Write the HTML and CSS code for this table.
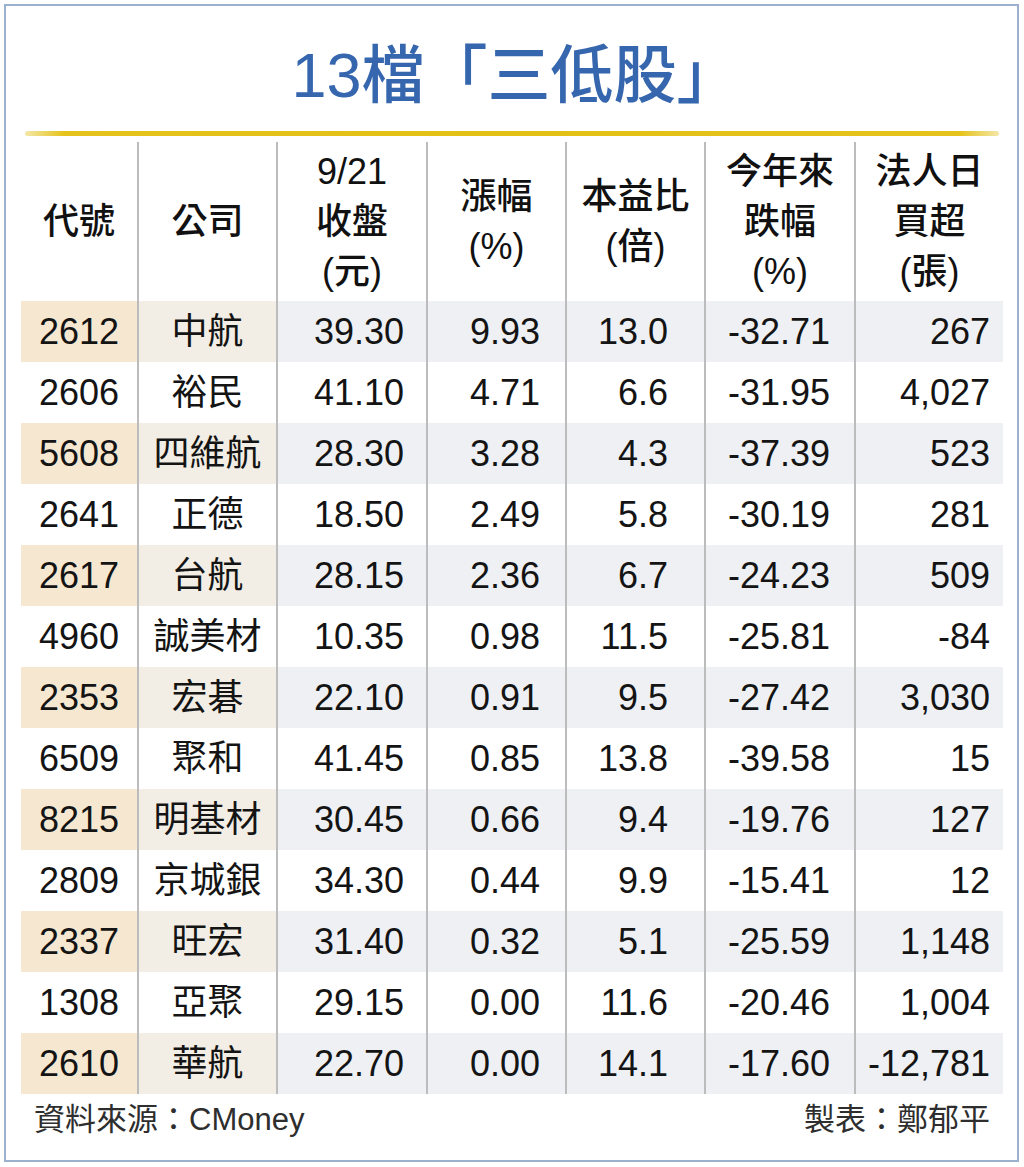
FILE: index.html
```html
<!DOCTYPE html>
<html lang="zh-Hant">
<head>
<meta charset="utf-8">
<title>13檔「三低股」</title>
<link rel="stylesheet" href="styles.css">
</head>
<body>
<div class="frame">
  <h1 class="title">13檔「三低股」</h1>
  <div class="rule"></div>
  <table class="stocks">
    <colgroup>
      <col class="w-code"><col class="w-name"><col class="w-close"><col class="w-chg"><col class="w-pe"><col class="w-ytd"><col class="w-inst">
    </colgroup>
    <thead>
      <tr>
        <th>代號</th>
        <th>公司</th>
        <th>9/21<br>收盤<br>(元)</th>
        <th>漲幅<br>(%)</th>
        <th>本益比<br>(倍)</th>
        <th>今年來<br>跌幅<br>(%)</th>
        <th>法人日<br>買超<br>(張)</th>
      </tr>
    </thead>
    <tbody>
      <tr class="hl"><td>2612</td><td>中航</td><td>39.30</td><td>9.93</td><td>13.0</td><td>-32.71</td><td>267</td></tr>
      <tr><td>2606</td><td>裕民</td><td>41.10</td><td>4.71</td><td>6.6</td><td>-31.95</td><td>4,027</td></tr>
      <tr class="hl"><td>5608</td><td>四維航</td><td>28.30</td><td>3.28</td><td>4.3</td><td>-37.39</td><td>523</td></tr>
      <tr><td>2641</td><td>正德</td><td>18.50</td><td>2.49</td><td>5.8</td><td>-30.19</td><td>281</td></tr>
      <tr class="hl"><td>2617</td><td>台航</td><td>28.15</td><td>2.36</td><td>6.7</td><td>-24.23</td><td>509</td></tr>
      <tr><td>4960</td><td>誠美材</td><td>10.35</td><td>0.98</td><td>11.5</td><td>-25.81</td><td>-84</td></tr>
      <tr class="hl"><td>2353</td><td>宏碁</td><td>22.10</td><td>0.91</td><td>9.5</td><td>-27.42</td><td>3,030</td></tr>
      <tr><td>6509</td><td>聚和</td><td>41.45</td><td>0.85</td><td>13.8</td><td>-39.58</td><td>15</td></tr>
      <tr class="hl"><td>8215</td><td>明基材</td><td>30.45</td><td>0.66</td><td>9.4</td><td>-19.76</td><td>127</td></tr>
      <tr><td>2809</td><td>京城銀</td><td>34.30</td><td>0.44</td><td>9.9</td><td>-15.41</td><td>12</td></tr>
      <tr class="hl"><td>2337</td><td>旺宏</td><td>31.40</td><td>0.32</td><td>5.1</td><td>-25.59</td><td>1,148</td></tr>
      <tr><td>1308</td><td>亞聚</td><td>29.15</td><td>0.00</td><td>11.6</td><td>-20.46</td><td>1,004</td></tr>
      <tr class="hl"><td>2610</td><td>華航</td><td>22.70</td><td>0.00</td><td>14.1</td><td>-17.60</td><td>-12,781</td></tr>
    </tbody>
  </table>
  <div class="footer">
    <span>資料來源：CMoney</span>
    <span>製表：鄭郁平</span>
  </div>
</div>
</body>
</html>
```

FILE: styles.css
```css
html, body {
  margin: 0;
  padding: 0;
  background: #ffffff;
}

body {
  font-family: "Liberation Sans", "Noto Sans CJK TC", sans-serif;
  color: #151515;
}

.frame {
  box-sizing: border-box;
  width: 1015px;
  height: 1158px;
  margin: 4px 0 0 4px;
  border: 2px solid #9cb0d0;
  background: #ffffff;
}

.title {
  margin: 0;
  padding-top: 14px;
  padding-left: 8px;
  height: 110px;
  line-height: 110px;
  text-align: center;
  font-size: 63px;
  font-weight: 500;
  color: #3566ae;
}

.rule {
  margin: 1px 18px 0 19px;
  height: 5px;
  border-radius: 3px;
  background: linear-gradient(to right, #f3e7a8 0%, #e6c31c 4%, #e3c015 50%, #e6c31c 96%, #f3e7a8 100%);
}

.stocks {
  margin: 6px 0 0 15px;
  width: 982px;
  table-layout: fixed;
  border-collapse: separate;
  border-spacing: 0;
  font-size: 36px;
}

.w-code { width: 116px; }
.w-name { width: 139px; }
.w-close { width: 150px; }
.w-chg { width: 139px; }
.w-pe { width: 139px; }
.w-ytd { width: 150px; }
.w-inst { width: 149px; }

.stocks th,
.stocks td {
  padding: 0;
  border-left: 2px solid #bcbcbc;
  vertical-align: middle;
  white-space: nowrap;
}

.stocks th:first-child,
.stocks td:first-child {
  border-left: none;
}

.stocks th {
  height: 159px;
  font-weight: 500;
  line-height: 50px;
  text-align: center;
  color: #111111;
}

.stocks td {
  height: 61px;
  line-height: 40px;
  color: #141414;
}

.stocks td:nth-child(1),
.stocks td:nth-child(2) {
  text-align: center;
}

.stocks td:nth-child(3) { text-align: right; padding-right: 22px; }
.stocks td:nth-child(4) { text-align: right; padding-right: 25px; }
.stocks td:nth-child(5) { text-align: right; padding-right: 36px; }
.stocks td:nth-child(6) { text-align: right; padding-right: 24px; }
.stocks td:nth-child(7) { text-align: right; padding-right: 13px; }

.stocks tr.hl td { background: #eef0f3; }
.stocks tr.hl td:nth-child(1) { background: #f6e8d0; }
.stocks tr.hl td:nth-child(2) { background: #f3eee5; }

.footer {
  display: flex;
  justify-content: space-between;
  margin-top: 8px;
  padding: 0 27px 0 28px;
  line-height: 36px;
  font-size: 31px;
  color: #2e2e2e;
}
```
